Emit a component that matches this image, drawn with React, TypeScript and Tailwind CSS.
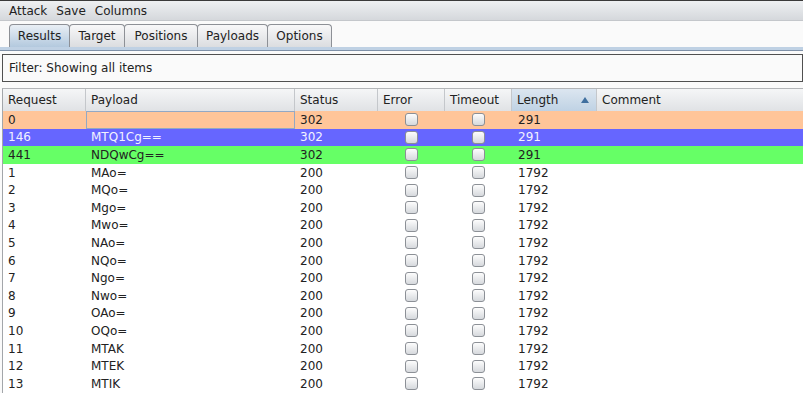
import React from "react";

type Row = { req: string; payload: string; status: string; len: string; kind?: "orange" | "blue" | "green" };

const rows: Row[] = [
  { req: "0", payload: "", status: "302", len: "291", kind: "orange" },
  { req: "146", payload: "MTQ1Cg==", status: "302", len: "291", kind: "blue" },
  { req: "441", payload: "NDQwCg==", status: "302", len: "291", kind: "green" },
  { req: "1", payload: "MAo=", status: "200", len: "1792" },
  { req: "2", payload: "MQo=", status: "200", len: "1792" },
  { req: "3", payload: "Mgo=", status: "200", len: "1792" },
  { req: "4", payload: "Mwo=", status: "200", len: "1792" },
  { req: "5", payload: "NAo=", status: "200", len: "1792" },
  { req: "6", payload: "NQo=", status: "200", len: "1792" },
  { req: "7", payload: "Ngo=", status: "200", len: "1792" },
  { req: "8", payload: "Nwo=", status: "200", len: "1792" },
  { req: "9", payload: "OAo=", status: "200", len: "1792" },
  { req: "10", payload: "OQo=", status: "200", len: "1792" },
  { req: "11", payload: "MTAK", status: "200", len: "1792" },
  { req: "12", payload: "MTEK", status: "200", len: "1792" },
  { req: "13", payload: "MTIK", status: "200", len: "1792" },
];

const tabs = [
  { name: "Results", w: "w-[61px]", active: true },
  { name: "Target", w: "w-[56px]" },
  { name: "Positions", w: "w-[74px]" },
  { name: "Payloads", w: "w-[71px]" },
  { name: "Options", w: "w-[65px]" },
];

function Check() {
  return (
    <div className="w-[13px] h-[13px] rounded-[3px] border border-[#8c9096] bg-gradient-to-b from-[#fdfdfd] to-[#d6d9dd]" />
  );
}

const grid = "grid grid-cols-[83px_209px_83px_67px_67px_85px_1fr]";

export default function App() {
  return (
    <div className="w-[803px] h-[393px] overflow-hidden bg-[#fafafa] text-[12px] text-[#222] font-['DejaVu_Sans',sans-serif] leading-none">
      {/* menu bar */}
      <div className="h-[21px] border-t border-[#3a3a3a] border-b border-b-[#c4c7cb] bg-gradient-to-b from-[#eef0f2] to-[#d5d8dc] flex items-center pl-[9px] gap-[9px] text-[#222]">
        <span>Attack</span>
        <span>Save</span>
        <span>Columns</span>
      </div>
      {/* tabs */}
      <div className="h-[26px] flex items-end pl-[9px]">
        {tabs.map((t, i) => (
          <div
            key={t.name}
            className={`${t.w} h-[23px] ${i > 0 ? "-ml-px" : ""} rounded-t-[4px] border border-b-0 border-[#8d9096] flex items-center justify-center ${
              t.active
                ? "bg-gradient-to-b from-[#e9eff5] to-[#b3c9de] z-10"
                : "bg-gradient-to-b from-[#f8f8f9] to-[#dbdde0]"
            }`}
          >
            {t.name}
          </div>
        ))}
      </div>
      <div className="h-[3px] bg-[#bfd1e4]" />
      <div className="h-px bg-[#7f91a8]" />
      {/* filter */}
      <div className="mt-[3px] ml-[2px] h-[28px] border border-[#505050] flex items-center pl-[6px] bg-[#fafafa]">
        Filter: Showing all items
      </div>
      {/* table */}
      <div className="mt-[6px] ml-[2px] border-l border-[#a3a6aa] border-t border-t-[#b3b5b8] bg-white">
        <div className={`${grid} h-[22px] bg-gradient-to-b from-[#f5f6f7] to-[#e0e2e5]`}>
          {["Request", "Payload", "Status", "Error", "Timeout"].map((h) => (
            <div key={h} className="border-r border-[#c4c7cb] flex items-center pl-[5px]">
              {h}
            </div>
          ))}
          <div className="border-r border-[#c4c7cb] flex items-center pl-[5px] pr-[7px] justify-between bg-gradient-to-b from-[#dce6f0] to-[#bfd2e4]">
            <span>Length</span>
            <svg width="8" height="6" viewBox="0 0 8 6">
              <polygon points="4,0 8,6 0,6" fill="#3f6f9f" />
            </svg>
          </div>
          <div className="flex items-center pl-[5px]">Comment</div>
        </div>
        {rows.map((r) => {
          const bg =
            r.kind === "orange"
              ? "bg-[#ffc599]"
              : r.kind === "blue"
              ? "bg-[#6666ff] text-[#f2f2ff]"
              : r.kind === "green"
              ? "bg-[#66ff66]"
              : "bg-white";
          return (
            <div key={r.req} className={`${grid} h-[17.6px] ${bg}`}>
              <div className="flex items-center pl-[5px]">{r.req}</div>
              <div
                className={`flex items-center pl-[5px] ${
                  r.kind === "orange" ? "border border-[#93a8c4]" : ""
                }`}
              >
                {r.payload}
              </div>
              <div className="flex items-center pl-[5px]">{r.status}</div>
              <div className="flex items-center justify-center">
                <Check />
              </div>
              <div className="flex items-center justify-center">
                <Check />
              </div>
              <div className="flex items-center pl-[6px]">{r.len}</div>
              <div />
            </div>
          );
        })}
      </div>
    </div>
  );
}
